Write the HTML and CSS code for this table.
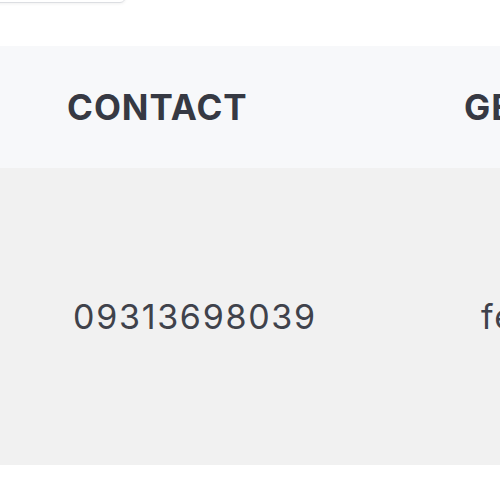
FILE: index.html
```html
<!DOCTYPE html>
<html lang="en">
<head>
  <meta charset="UTF-8">
  <meta name="viewport" content="width=device-width, initial-scale=1.0">
  <title>Contacts</title>
  <link rel="stylesheet" href="styles.css">
</head>
<body>
  <div class="toolbar">
    <div class="search"></div>
  </div>

  <table class="contacts">
    <thead>
      <tr>
        <th class="col-contact">Contact</th>
        <th class="col-gender">Gender</th>
      </tr>
    </thead>
    <tbody>
      <tr>
        <td class="col-contact">09313698039</td>
        <td class="col-gender">female</td>
      </tr>
    </tbody>
  </table>
</body>
</html>
```

FILE: styles.css
```css
body {
  margin: 0;
  background: #ffffff;
  font-family: Inter, 'Noto Sans', Arial, sans-serif;
  overflow: hidden;
  width: 500px;
  height: 500px;
}

.toolbar {
  display: flex;
  align-items: flex-start;
  height: 46px;
}

.search {
  flex: none;
  width: 136px;
  height: 30px;
  margin-top: -27px;
  margin-left: -10px;
  border: 1px solid #dcdee2;
  border-radius: 6px;
  box-shadow: 0 1px 3px rgba(0, 0, 0, 0.06);
  box-sizing: border-box;
}

.contacts {
  border-collapse: collapse;
  table-layout: fixed;
  width: 800px;
}

.contacts th {
  height: 122px;
  padding: 0;
  background: #f7f8fa;
  color: #363943;
  font-size: 35px;
  font-weight: 700;
  letter-spacing: 1px;
  text-align: left;
  text-transform: uppercase;
}

.contacts td {
  height: 297px;
  padding: 0;
  background: #f1f1f1;
  color: #3f424b;
  font-size: 34px;
  font-weight: 400;
  letter-spacing: 1.7px;
}

th.col-contact {
  width: 400px;
  padding-left: 67px;
  box-sizing: border-box;
}

th.col-gender {
  padding-left: 64px;
}

td.col-contact {
  padding-left: 73px;
}

td.col-gender {
  padding-left: 81px;
}
```
